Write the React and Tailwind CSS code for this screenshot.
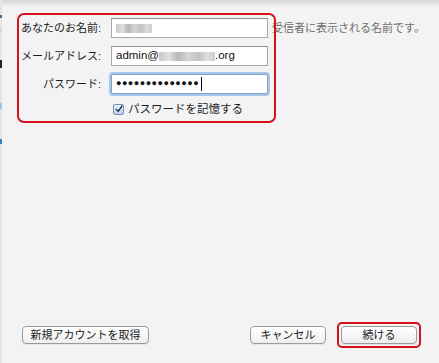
import React from "react";

const font = { fontFamily: '"Liberation Sans", "Noto Sans CJK JP", sans-serif' };

// mosaic placeholder for masked text
const Masked = ({ widthClass }) => (
  <span
    className={`inline-block h-[9px] ${widthClass} rounded-[1px] bg-[linear-gradient(90deg,#c9c6ca_0%,#e2e0e2_18%,#b9b5ba_34%,#d6d4d6_52%,#c4c1c5_70%,#dedcde_86%,#cfcccf_100%)] blur-[0.6px]`}
  />
);

const MacButton = ({ children, className = "" }) => (
  <button
    type="button"
    className={`h-[18px] whitespace-nowrap rounded-[4px] border border-[#9b9b9b] bg-[linear-gradient(#ffffff,#eeeeee)] px-1 text-[11px] leading-none text-[#1a1a1a] shadow-[0_1px_0_rgba(0,0,0,0.06)] ${className}`}
  >
    {children}
  </button>
);

const Row = ({ label, children, focused }) => (
  <div className="flex items-center">
    <label className="flex w-[80px] shrink-0 justify-end whitespace-nowrap text-[11px] leading-none text-[#1c1c1c]">
      <span className="shrink-0">{label}</span>
    </label>
    <div
      className={`ml-[10px] flex h-5 w-[157px] shrink-0 items-center px-[4px] text-[11.5px] text-[#111] ${
        focused
          ? "rounded-[2px] border border-[#7da2ce] bg-white shadow-[0_0_0_2px_#a9c6ea]"
          : "border border-[#a8a8a8] border-t-[#8e8e8e] bg-white"
      }`}
    >
      {children}
    </div>
  </div>
);

export default function App() {
  return (
    <div className="relative flex h-[363px] w-[439px] bg-[#f3f3f3]" style={font}>
      {/* left edge: sliver of the window behind */}
      <div className="flex w-[2px] flex-col bg-[#e4e4e4]">
        <div className="mt-[15px] h-[3px] bg-[#3b6e96]" />
        <div className="mt-[10px] h-[4px] bg-[#cfd9e2]" />
        <div className="mt-[28px] h-[8px] bg-[#222]" />
        <div className="mt-[35px] h-[6px] bg-[#9cc8e6]" />
        <div className="mt-[30px] h-[5px] bg-[#3c7fb9]" />
      </div>

      <div className="relative flex flex-1 flex-col">
        {/* top shadow from the title bar */}
        <div className="pointer-events-none absolute inset-x-0 top-0 h-[7px] bg-[linear-gradient(#d6d6d6,rgba(243,243,243,0))]" />

        <div className="mt-[13px] flex">
          <div className="relative z-10 ml-[15px] h-[110px] w-[259px] shrink-0 rounded-[7px] border-2 border-[#d4121c] pt-[3px] pl-[2px]">
            <div className="flex flex-col gap-2">
              <Row label="あなたのお名前:">
                <Masked widthClass="w-[36px]" />
              </Row>
              <Row label="メールアドレス:">
                <span>admin@</span>
                <Masked widthClass="w-[56px]" />
                <span>.org</span>
              </Row>
              <Row label="パスワード:" focused>
                <span className="text-[9px] tracking-[0.5px]">●●●●●●●●●●●●●●</span>
                <span className="ml-[2px] h-[14px] w-px bg-black" />
              </Row>
            </div>
            <div className="mt-[10px] ml-[92px] flex items-center">
              <span className="flex h-[11px] w-[11px] items-center justify-center rounded-[2px] border border-[#7d8fa8] bg-[linear-gradient(#e8f0fb,#bcd0ea)]">
                <svg viewBox="0 0 12 12" className="h-[12px] w-[12px] -mt-[2px] ml-[1px]">
                  <path d="M2 6.5 L4.8 9.5 L10.5 1.5" fill="none" stroke="#1b2f55" strokeWidth="2" strokeLinecap="round" strokeLinejoin="round" />
                </svg>
              </span>
              <span className="ml-[4px] text-[11.5px] leading-none text-[#1c1c1c]">パスワードを記憶する</span>
            </div>
          </div>
          <p className="mt-[10px] -ml-[4px] text-[11px] leading-none whitespace-nowrap text-[#6e6e6e]">
            受信者に表示される名前です。
          </p>
        </div>

        <div className="flex-1" />

        <div className="mb-[15px] flex items-center">
          <MacButton className="ml-[20px] w-[127px]">新規アカウントを取得</MacButton>
          <div className="flex-1" />
          <MacButton className="w-[76px]">キャンセル</MacButton>
          <div className="mr-[18px] ml-[11px] flex h-[26px] w-[84px] items-center justify-center rounded-[5px] border-2 border-[#d4121c]">
            <MacButton className="w-[76px]">続ける</MacButton>
          </div>
        </div>
      </div>
    </div>
  );
}
